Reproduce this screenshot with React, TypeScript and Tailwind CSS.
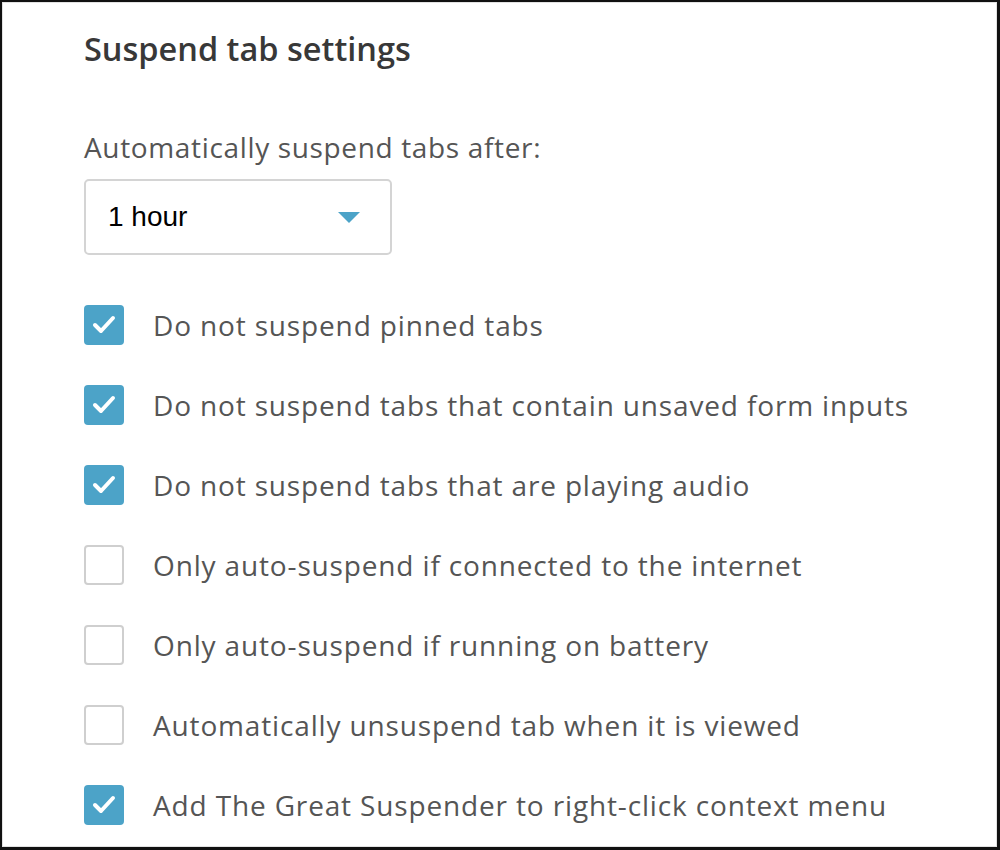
import React from "react";

const items: { label: string; checked: boolean }[] = [
  { label: "Do not suspend pinned tabs", checked: true },
  { label: "Do not suspend tabs that contain unsaved form inputs", checked: true },
  { label: "Do not suspend tabs that are playing audio", checked: true },
  { label: "Only auto-suspend if connected to the internet", checked: false },
  { label: "Only auto-suspend if running on battery", checked: false },
  { label: "Automatically unsuspend tab when it is viewed", checked: false },
  { label: "Add The Great Suspender to right-click context menu", checked: true },
];

function Box({ checked }: { checked: boolean }) {
  if (checked) {
    return (
      <div className="w-[40px] h-[40px] rounded-[4px] bg-[#4ca3c8] shrink-0">
        <svg width="40" height="40" viewBox="0 0 40 40" fill="none">
          <polyline points="11,20 17,26 29,13" stroke="#fff" strokeWidth="4" strokeLinecap="round" strokeLinejoin="round" />
        </svg>
      </div>
    );
  }
  return <div className="w-[40px] h-[40px] rounded-[4px] border-2 border-[#cfcfcf] bg-white shrink-0" />;
}

export default function App() {
  return (
    <div className="w-[1000px] h-[850px] bg-white border-l-2 border-t-2 border-r-[3px] border-b-[3px] border-[#111] box-border">
      <div className="w-full h-full border border-[#e2e2e2] pl-[81px] pt-[26px]" style={{ fontFamily: '"Open Sans", sans-serif' }}>
        <h1 className="text-[32.5px] font-semibold text-[#383838] leading-[40px]">Suspend tab settings</h1>
        <div className="mt-[60px] text-[28px] tracking-[0.65px] text-[#555] leading-[36px]">Automatically suspend tabs after:</div>
        <div className="mt-[14px] w-[308px] h-[76px] border-2 border-[#d4d4d4] rounded-[5px] flex items-center justify-between pl-[22px] pr-[30px]">
          <span className="text-[28px] text-black" style={{ fontFamily: '"Liberation Sans", Arial, sans-serif' }}>1 hour</span>
          <svg width="22" height="11" viewBox="0 0 22 11">
            <polygon points="0,0 22,0 11,11" fill="#4ca3c8" />
          </svg>
        </div>
        <div className="mt-[50px] flex flex-col gap-[40px]">
          {items.map((it) => (
            <div key={it.label} className="flex items-center h-[40px]">
              <Box checked={it.checked} />
              <span className="ml-[29px] text-[28px] tracking-[0.85px] text-[#555] whitespace-nowrap">{it.label}</span>
            </div>
          ))}
        </div>
      </div>
    </div>
  );
}
